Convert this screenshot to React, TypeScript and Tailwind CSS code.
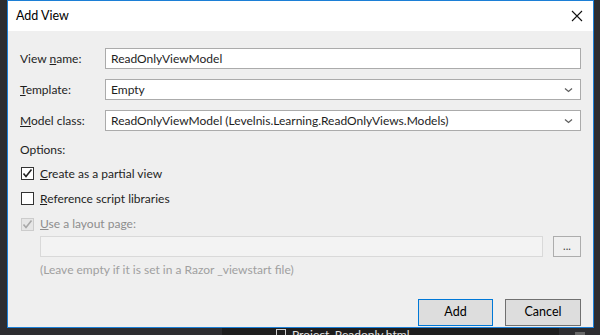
import React from "react";

const font = { fontFamily: '"Segoe UI", Lato, "Noto Sans", sans-serif' };

function Chevron() {
  return (
    <svg width="9" height="6" viewBox="0 0 9 6" className="shrink-0">
      <path d="M1 1.5 L4.5 4.5 L8 1.5" fill="none" stroke="#606060" strokeWidth="1.3" />
    </svg>
  );
}

function Check({ color }: { color: string }) {
  return (
    <svg width="11" height="11" viewBox="0 0 11 11">
      <path d="M1.5 5.5 L4 8.5 L9.5 1.5" fill="none" stroke={color} strokeWidth="1.6" />
    </svg>
  );
}

function Row({ label, children, mb = true }: { label: React.ReactNode; children: React.ReactNode; mb?: boolean }) {
  return (
    <div className={`flex items-center h-[21px] ${mb ? "mb-[10px]" : ""}`}>
      <div className="w-[85px] text-[#1e1e1e] leading-none">{label}</div>
      {children}
    </div>
  );
}

export default function App() {
  return (
    <div className="w-[600px] h-[335px] bg-[#2d2d30] overflow-hidden flex flex-col" style={font}>
      <div className="ml-[7px] w-[587px] h-[328px] border border-[#1c7fd6] flex flex-col shrink-0">
        <div className="h-[30px] bg-white flex items-center justify-between pl-[8px] pr-[10px]">
          <span className="text-[12.5px] text-black">Add View</span>
          <svg width="12" height="12" viewBox="0 0 12 12">
            <path d="M1 1 L11 11 M11 1 L1 11" stroke="#111" strokeWidth="1.1" />
          </svg>
        </div>
        <div className="flex-1 bg-[#efefef] pl-[12px] pr-[12px] pt-[17px] flex flex-col text-[12px]">
          <Row label={<>View <u>n</u>ame:</>}>
            <div className="flex-1 h-[21px] bg-white border border-[#ababab] flex items-center pl-[5px] text-[#1e1e1e]">
              ReadOnlyViewModel
            </div>
          </Row>
          <Row label={<><u>T</u>emplate:</>}>
            <div className="flex-1 h-[21px] bg-white border border-[#ababab] flex items-center justify-between pl-[5px] pr-[7px] text-[#1e1e1e]">
              <span>Empty</span>
              <Chevron />
            </div>
          </Row>
          <Row label={<><u>M</u>odel class:</>} mb={false}>
            <div className="flex-1 h-[21px] bg-white border border-[#ababab] flex items-center justify-between pl-[5px] pr-[7px] text-[#1e1e1e]">
              <span>ReadOnlyViewModel (Levelnis.Learning.ReadOnlyViews.Models)</span>
              <Chevron />
            </div>
          </Row>
          <div className="mt-[11px] h-[16px] flex items-center text-[#1e1e1e]">Options:</div>
          <div className="mt-[9px] flex items-center h-[13px] ml-[1px]">
            <div className="w-[13px] h-[13px] border border-[#333] bg-white flex items-center justify-center">
              <Check color="#222" />
            </div>
            <span className="ml-[6px] text-[#1e1e1e]"><u>C</u>reate as a partial view</span>
          </div>
          <div className="mt-[12px] flex items-center h-[13px] ml-[1px]">
            <div className="w-[13px] h-[13px] border border-[#333] bg-white" />
            <span className="ml-[6px] text-[#1e1e1e]"><u>R</u>eference script libraries</span>
          </div>
          <div className="mt-[13px] flex items-center h-[12px] ml-[1px]">
            <div className="w-[13px] h-[13px] border border-[#cccccc] bg-[#e6e6e6] flex items-center justify-center">
              <Check color="#a8a8a8" />
            </div>
            <span className="ml-[6px] text-[#8d8d8d]"><u>U</u>se a layout page:</span>
          </div>
          <div className="mt-[6px] flex items-center h-[21px] ml-[20px]">
            <div className="w-[503px] h-[21px] border border-[#d9d9d9] bg-[#f3f3f3]" />
            <div className="ml-[10px] w-[28px] h-[21px] border border-[#adadad] bg-[#f0f0f0] flex items-center justify-center text-[11px] text-[#444] leading-none pb-[2px]">...</div>
          </div>
          <div className="mt-[5px] ml-[20px] h-[16px] flex items-center text-[#a0a0a0]">
            (Leave empty if it is set in a Razor _viewstart file)
          </div>
          <div className="mt-[21px] flex justify-end gap-[12px]">
            <div className="w-[75px] h-[27px] border border-[#0078d7] bg-[#dddddd] flex items-center justify-center text-[12.5px] text-black">Add</div>
            <div className="w-[76px] h-[27px] border border-[#707070] bg-[#dddddd] flex items-center justify-center text-[12.5px] text-black">Cancel</div>
          </div>
        </div>
      </div>
      <div className="h-[7px] flex shrink-0">
        <div className="w-[222px] bg-[#2d2d30]" />
        <div className="flex-1 bg-[#1e1e1e] relative overflow-hidden">
          <div className="flex items-start pl-[54px] pt-[1px]">
            <div className="w-[10px] h-[12px] border border-[#cfcfcf]" />
            <span className="ml-[6px] text-[12px] text-[#e0e0e0] leading-none">Project_Readonly.html</span>
          </div>
        </div>
        <div className="w-[41px] bg-[#2d2d30] flex justify-center pt-[4px]">
          <div className="w-[10px] h-[3px] bg-[#686868]" />
        </div>
      </div>
    </div>
  );
}
